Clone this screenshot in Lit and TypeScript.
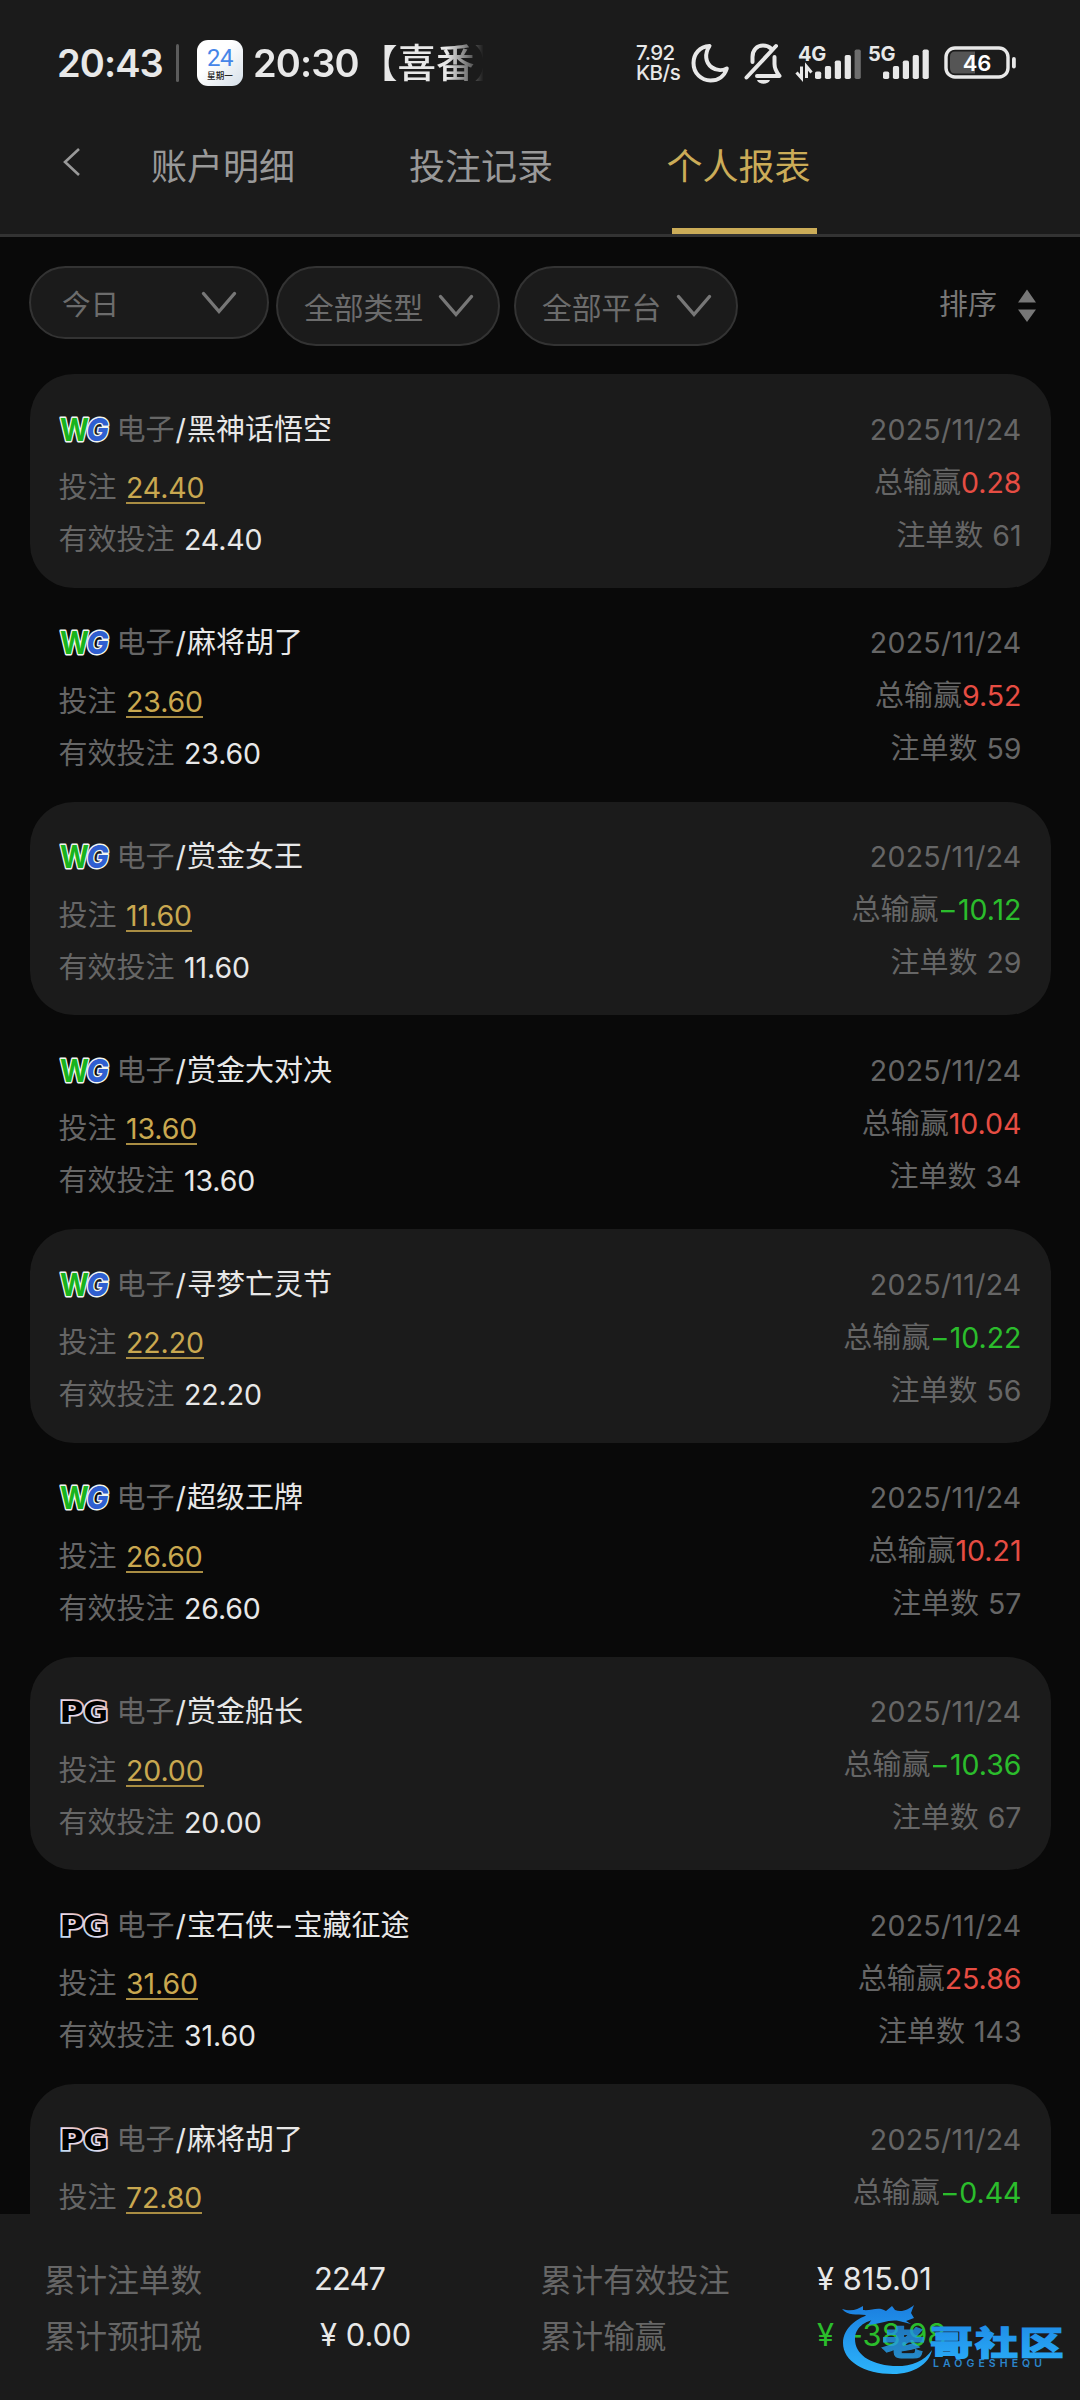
import { LitElement, css, html, svg, nothing } from 'lit'
import { customElement, property } from 'lit/decorators.js'
import { classMap } from 'lit/directives/class-map.js'

interface Report {
    vendor: 'WG' | 'PG';
    game: string;
    bet: string;
    valid: string;
    win: string;
    count: number;
}

const DATE = '2025/11/24';

const REPORTS: Report[] = [
    { vendor: 'WG', game: '黑神话悟空', bet: '24.40', valid: '24.40', win: '0.28', count: 61 },
    { vendor: 'WG', game: '麻将胡了', bet: '23.60', valid: '23.60', win: '9.52', count: 59 },
    { vendor: 'WG', game: '赏金女王', bet: '11.60', valid: '11.60', win: '-10.12', count: 29 },
    { vendor: 'WG', game: '赏金大对决', bet: '13.60', valid: '13.60', win: '10.04', count: 34 },
    { vendor: 'WG', game: '寻梦亡灵节', bet: '22.20', valid: '22.20', win: '-10.22', count: 56 },
    { vendor: 'WG', game: '超级王牌', bet: '26.60', valid: '26.60', win: '10.21', count: 57 },
    { vendor: 'PG', game: '赏金船长', bet: '20.00', valid: '20.00', win: '-10.36', count: 67 },
    { vendor: 'PG', game: '宝石侠-宝藏征途', bet: '31.60', valid: '31.60', win: '25.86', count: 143 },
    { vendor: 'PG', game: '麻将胡了', bet: '72.80', valid: '72.80', win: '-0.44', count: 58 },
];

@customElement('status-bar')
export class StatusBar extends LitElement {
    // five rising bars, the last (5 - level) ones dimmed
    bars(level: number) {
        return [0, 1, 2, 3, 4].map(i => svg`
            <rect x=${i * 9.9} y=${22 - i * 5.5} width="6.2" height=${7.5 + i * 5.5} rx="1.8"
                fill=${i < level ? '#e8e8e8' : '#6d6d6d'}></rect>
        `);
    }

    render() {
        return html`
        <span class="time">20:43</span>
        <span class="sep"></span>
        <span class="cal"><b>24</b><i>星期一</i></span>
        <span class="note"><span class="time">20:30</span><span class="cjk">【喜番】</span></span>
        <span class="speed"><span>7.92</span><span>KB/s</span></span>
        <svg class="moon" width="38" height="40" viewBox="0 0 38 40">
            <path d="M18.5 3 C8.500 3.500 2.500 11.200 2.500 20 C2.500 30.500 10.500 37.500 19.500 37.500 C27.500 37.500 33.500 33 35.800 25.500 C32 27.500 26 28 21 24.500 C14 19.500 13.500 10.500 18.500 3 Z"
                fill="none" stroke="#e8e8e8" stroke-width="4" stroke-linejoin="round"></path>
        </svg>
        <svg class="bell" width="40" height="42" viewBox="0 0 40 42">
            <g fill="none" stroke="#e8e8e8" stroke-width="4" stroke-linecap="round" stroke-linejoin="round">
                <path d="M9.500 20 V15 C9.500 8 14 3.500 20 3.500 C23.500 3.500 26 4.500 28 6.500"></path>
                <path d="M33 4 L3.500 35.500"></path>
                <path d="M31.500 15 V22 C31.500 26 33 29.500 36.500 34 H14"></path>
            </g>
            <path d="M14 38 H27 C25.500 43 15.500 43 14 38 Z" fill="#e8e8e8"></path>
        </svg>
        <svg class="sig4" width="68" height="36" viewBox="0 0 68 36">
            <text x="3" y="15.500" class="net">4G</text>
            <path d="M6.500 21.500 V33 L1.500 27.500 M11.500 33 V21.500 L16.500 27.500" fill="none" stroke="#e8e8e8" stroke-width="3"></path>
            <g transform="translate(20 4.500)">${this.bars(4)}</g>
        </svg>
        <svg class="sig5" width="62" height="36" viewBox="0 0 62 36">
            <text x="0" y="15.500" class="net">5G</text>
            <g transform="translate(15 4.500)">${this.bars(5)}</g>
        </svg>
        <svg class="battery" width="74" height="34" viewBox="0 0 74 34">
            <rect x="2" y="2" width="62" height="29" rx="9" fill="none" stroke="#e8e8e8" stroke-width="3.400"></rect>
            <path d="M11 5.500 H31 V27.500 H11 Q6 27.500 6 22 V11 Q6 5.500 11 5.500 Z" fill="#555"></path>
            <rect x="68" y="11" width="3.800" height="11.500" rx="1.900" fill="#e8e8e8"></rect>
            <text x="33" y="24.500" class="pct">46</text>
        </svg>
        `
    }

    static get styles() {
        return css`
        :host {
            display: flex;
            align-items: center;
            box-sizing: border-box;
            padding-left: 57px;
            color: #e8e8e8;
            font-family: Inter, 'Noto Sans CJK SC', sans-serif;
        }

        svg {
            flex: none;
            overflow: visible;
        }

        .time {
            flex: none;
            width: 108px;
            font-size: 38px;
            font-weight: 600;
            letter-spacing: -0.9px;
            line-height: 46px;
            white-space: nowrap;
        }

        .sep {
            width: 3px;
            height: 38px;
            margin-left: 11px;
            border-radius: 2px;
            background-color: #5c5c5c;
        }

        .cal {
            display: flex;
            flex-direction: column;
            align-items: center;
            width: 46px;
            height: 46px;
            margin-left: 18px;
            border-radius: 11px;
            background: linear-gradient(135deg, #ffffff 40%, #d5dfe8);
        }

        .cal b {
            margin-top: 5px;
            color: #4585e8;
            font: 400 24px/26px Roboto, sans-serif;
            letter-spacing: -0.5px;
        }

        .cal i {
            color: #222;
            font: 500 8.6px/9px 'Noto Sans CJK SC', sans-serif;
        }

        .note {
            display: flex;
            width: 230px;
            margin-left: 10px;
            margin-right: 2px;
            overflow: hidden;
            mask-image: linear-gradient(90deg, #000 194px, transparent 231px);
        }

        .cjk {
            font-size: 38.5px;
            font-weight: 500;
            line-height: 46px;
            white-space: nowrap;
            margin-left: -2px;
        }

        .speed {
            display: flex;
            flex-direction: column;
            width: 54px;
            margin-left: 151px;
            font-size: 20.5px;
            font-weight: 500;
            line-height: 20px;
            letter-spacing: -0.5px;
        }

        .moon {
            margin-left: 1px;
        }

        .bell {
            margin-left: 14px;
        }

        .sig4 {
            margin-left: 12px;
        }

        .sig5 {
            margin-left: 5px;
        }

        .battery {
            margin-left: 14px;
        }

        .net {
            fill: #e8e8e8;
            font-size: 20px;
            font-weight: 700;
            letter-spacing: -0.3px;
        }

        .pct {
            fill: #fff;
            font-size: 22px;
            font-weight: 600;
            text-anchor: middle;
        }
        `
    }
}

@customElement('vendor-logo')
export class VendorLogo extends LitElement {
    @property() name = 'WG';

    render() {
        if (this.name === 'WG') {
            return html`
            <svg width="54" height="30" viewBox="0 0 54 30">
                <text x="2" y="25.500" class="w" textLength="29" lengthAdjust="spacingAndGlyphs">W</text>
                <text x="28.500" y="25.500" class="g" textLength="22" lengthAdjust="spacingAndGlyphs">G</text>
            </svg>
            `
        }
        return html`
        <svg width="54" height="30" viewBox="0 0 54 30">
            <defs>
                <linearGradient id="rim" x1="0" y1="1" x2="1" y2="0">
                    <stop offset="0" stop-color="#a8d8f0"></stop>
                    <stop offset="0.5" stop-color="#eadcee"></stop>
                    <stop offset="1" stop-color="#e8b4a8"></stop>
                </linearGradient>
            </defs>
            <text x="1.500" y="25" class="p" textLength="24" lengthAdjust="spacingAndGlyphs">P</text>
            <text x="25.500" y="25" class="p" textLength="24.500" lengthAdjust="spacingAndGlyphs">G</text>
        </svg>
        `
    }

    static get styles() {
        return css`
        :host {
            display: block;
            width: 54px;
            height: 30px;
        }

        svg {
            display: block;
            overflow: visible;
        }

        text {
            font-family: Inter, sans-serif;
            font-style: italic;
            font-weight: 800;
            font-size: 31px;
            paint-order: stroke;
            stroke: #f2f6f2;
            stroke-width: 2.8px;
            stroke-linejoin: round;
        }

        .w {
            fill: #18b41c;
            font-style: normal;
            font-weight: 700;
        }

        .g {
            fill: #2f5fd0;
        }

        .p {
            fill: #000;
            font-family: 'DejaVu Sans', sans-serif;
            font-style: normal;
            font-weight: 700;
            font-size: 28px;
            stroke: url(#rim);
            stroke-width: 3.4px;
            stroke-linejoin: miter;
        }
        `
    }
}

@customElement('report-row')
export class ReportRow extends LitElement {
    @property({ attribute: false }) report!: Report;

    // hyphens are drawn wide, in names and in amounts
    dashed(text: string) {
        return text.split(/(-)/).map(part => part === '-' ? html`<i>-</i>` : part);
    }

    render() {
        const r = this.report;
        const lose = r.win.startsWith('-');
        return html`
        <div class="left">
            <div class="title">
                <vendor-logo name=${r.vendor}></vendor-logo>
                <span>电子</span><span class="game"><em>/</em>${this.dashed(r.game)}</span>
            </div>
            <div class="bet">投注<a>${r.bet}</a></div>
            <div>有效投注<b>${r.valid}</b></div>
        </div>
        <div class="right">
            <div class="num date">${DATE}</div>
            <div>总输赢<span class=${classMap({ num: true, win: !lose, lose })}>${this.dashed(r.win)}</span></div>
            <div>注单数<span class="num count">${r.count}</span></div>
        </div>
        `
    }

    static get styles() {
        return css`
        :host {
            display: flex;
            justify-content: space-between;
            box-sizing: border-box;
            height: 213.75px;
            padding: 0 29px;
            border-radius: 44px;
            color: #666;
            font-size: 29px;
            white-space: nowrap;
        }

        :host(.shade) {
            background-color: #1b1b1b;
        }

        .left {
            padding-top: 35.5px;
            line-height: 40px;
        }

        .title {
            display: flex;
            align-items: center;
            margin-bottom: 18.5px;
        }

        .title vendor-logo {
            margin: 0 5px 0 -1px;
        }

        .game {
            color: #e8e8e8;
        }

        em {
            font-style: normal;
            margin: 0 1px 0 1px;
        }

        i {
            display: inline-block;
            width: 19.5px;
            font-style: normal;
            text-align: center;
            transform: scaleX(1.5);
        }

        .bet {
            margin-bottom: 12px;
        }

        a {
            display: inline-block;
            margin-left: 9.5px;
            color: #c9a850;
            font-size: 28.5px;
            line-height: 28px;
            letter-spacing: -0.1px;
            border-bottom: 2px solid #a98d43;
        }

        b {
            margin-left: 9.5px;
            color: #e8e8e8;
            font-size: 28.5px;
            font-weight: 400;
            letter-spacing: -0.1px;
        }

        .right {
            padding-top: 28.5px;
            line-height: 53px;
            text-align: right;
        }

        .num {
            font-size: 28.5px;
            letter-spacing: 0;
        }

        .date {
            letter-spacing: 0.25px;
        }

        .win {
            color: #e64d43;
        }

        .lose {
            color: #2bbd2c;
        }

        .count {
            margin-left: 9px;
        }
        `
    }
}

@customElement('water-mark')
export class WaterMark extends LitElement {
    render() {
        return html`
        <svg width="230" height="80" viewBox="840 2300 230 80">
            <defs>
                <linearGradient id="blue" gradientUnits="userSpaceOnUse" x1="0" y1="2305" x2="0" y2="2375">
                    <stop offset="0" stop-color="#1b7fe0"></stop>
                    <stop offset="1" stop-color="#2cb4fb"></stop>
                </linearGradient>
            </defs>
            <g fill="url(#blue)" stroke="url(#blue)" stroke-width="0">
                <path d="M878 2313 C858 2315 843 2328 843 2343 C843 2361 864 2374 893 2374 C914 2374 929 2364 932 2350 C924 2362 909 2367 893 2366 C869 2364 855 2354 855 2339 C855 2329 863 2320 880 2319 Z"></path>
                <path d="M842 2309 C852 2312 858 2309 863 2306 L863 2310 C872 2311 878 2306 886 2311 L892 2306 L895 2310 C902 2313 909 2309 914 2305 L911 2313 L914 2318 L906 2321 L911 2324 L899 2321 C890 2319 880 2324 868 2325 L872 2319 L862 2320 L866 2315 C856 2314 848 2316 842 2309 Z"></path>
                <text x="882" y="2354.500" class="zh thin" textLength="43" lengthAdjust="spacingAndGlyphs">老</text>
                <text x="930" y="2354.500" class="zh" textLength="43" lengthAdjust="spacingAndGlyphs">哥</text>
                <text x="975" y="2354.500" class="zh" textLength="43" lengthAdjust="spacingAndGlyphs">社</text>
                <text x="1019.500" y="2354.500" class="zh" textLength="44" lengthAdjust="spacingAndGlyphs">区</text>
                <text x="933" y="2367" class="en" textLength="109">LAOGESHEQU</text>
            </g>
        </svg>
        `
    }

    static get styles() {
        return css`
        svg {
            display: block;
        }

        .zh {
            font: 900 33px 'Noto Sans CJK SC', sans-serif;
            stroke-width: 1.2px;
        }

        .thin {
            opacity: 0.8;
        }

        .en {
            font: 600 10.5px Inter, sans-serif;
            fill: #2c86cc;
        }
        `
    }
}

@customElement('app-root')
export class AppRoot extends LitElement {
    chevron() {
        return html`
        <svg class="chevron" width="36" height="24" viewBox="0 0 36 24">
            <path d="M2.500 2.500 L18 20.500 L33.500 2.500" fill="none" stroke="#777" stroke-width="3.400" stroke-linecap="round"></path>
        </svg>
        `
    }

    render() {
        return html`
        <header>
            <status-bar></status-bar>
            <nav>
                <svg class="back" width="20" height="30" viewBox="0 0 20 30">
                    <path d="M17 2 L3 15 L17 28" fill="none" stroke="#999" stroke-width="2.600"></path>
                </svg>
                <span class="tab">账户明细</span>
                <span class="tab">投注记录</span>
                <span class="tab active">个人报表</span>
            </nav>
        </header>
        <div class="filters">
            <div class="pill day">今日${this.chevron()}</div>
            <div class="pill">全部类型${this.chevron()}</div>
            <div class="pill last">全部平台${this.chevron()}</div>
            <div class="sort"><span>排序</span>
                <svg width="20" height="34" viewBox="0 0 20 34">
                    <path d="M10 0.500 L19 13.500 H1 Z M10 33 L19 20.500 H1 Z" fill="#777"></path>
                </svg>
            </div>
        </div>
        <main>
            ${REPORTS.map((r, i) => html`
                <report-row class=${i % 2 ? nothing : 'shade'} .report=${r}></report-row>
            `)}
        </main>
        <footer>
            <span>累计注单数</span><b class="total">2247</b>
            <span>累计有效投注</span><b>¥<i></i>815.01</b>
            <span>累计预扣税</span><b class="tax">¥<i></i>0.00</b>
            <span>累计输赢</span><b class="loss">¥<i></i><i></i>-38.98</b>
            <water-mark></water-mark>
        </footer>
        `
    }

    static get styles() {
        return css`
        :host {
            display: flex;
            flex-direction: column;
            width: 1080px;
            height: 2400px;
            overflow: hidden;
            background-color: #090909;
            color: #666;
            font-family: Inter, 'Noto Sans CJK SC', sans-serif;
        }

        header {
            flex: none;
            box-sizing: border-box;
            height: 237px;
            background-color: #1b1b1b;
            border-bottom: 3px solid #333;
        }

        status-bar {
            height: 124px;
            padding-top: 2px;
        }

        nav {
            display: flex;
            height: 110px;
            padding-left: 62px;
        }

        .back {
            margin-top: 23px;
        }

        .tab {
            box-sizing: border-box;
            width: 145px;
            height: 110px;
            margin-left: 69px;
            color: #999;
            font-size: 36px;
            line-height: 87px;
            white-space: nowrap;
        }

        .tab + .tab {
            margin-left: 113px;
        }

        .tab.active {
            margin-left: 118px;
            text-indent: -5.5px;
            color: #cbac58;
            border-bottom: 6px solid #cbac58;
        }

        .filters {
            flex: none;
            display: flex;
            align-items: flex-start;
            height: 108px;
            margin-top: 29px;
            padding: 0 43px 0 29px;
        }

        .pill {
            display: flex;
            align-items: center;
            justify-content: space-between;
            box-sizing: border-box;
            width: 224px;
            height: 80px;
            margin-left: 7px;
            padding: 0 24px 1px 26px;
            border: 2px solid #333;
            border-radius: 40px;
            background-color: #1b1b1b;
            font-size: 29.8px;
            color: #6c6c6c;
        }

        .pill.day {
            width: 240px;
            height: 73px;
            margin-left: 0;
            padding: 0 30px 0 31px;
            font-size: 28.6px;
        }

        .pill.last {
            margin-left: 14px;
        }

        .sort {
            display: flex;
            align-items: center;
            gap: 20px;
            height: 79px;
            margin-left: auto;
            font-size: 29px;
            color: #777;
        }

        .sort span {
            margin-bottom: 8px;
        }

        main {
            flex: none;
            height: 1840px;
            padding: 0 29.5px;
            overflow: hidden;
        }

        footer {
            position: relative;
            flex: 1;
            display: grid;
            grid-template-columns: 270px 226px 276px 1fr;
            grid-auto-rows: 56px;
            align-items: center;
            box-sizing: border-box;
            padding: 36.5px 0 0 44px;
            background-color: #1b1b1b;
            font-size: 31.6px;
            white-space: nowrap;
        }

        footer span {
            padding-bottom: 2px;
        }

        b {
            padding-left: 1px;
            color: #e8e8e8;
            font-size: 30.8px;
            font-weight: 400;
            letter-spacing: -0.1px;
        }

        b i {
            display: inline-block;
            width: 9px;
        }

        .total {
            padding-left: 0;
            letter-spacing: -0.8px;
        }

        .tax {
            padding-left: 6px;
        }

        .loss {
            color: #2bbd2c;
        }

        .loss i {
            width: 7.5px;
        }

        water-mark {
            position: absolute;
            left: 840px;
            top: 86px;
        }
        `
    }
}
